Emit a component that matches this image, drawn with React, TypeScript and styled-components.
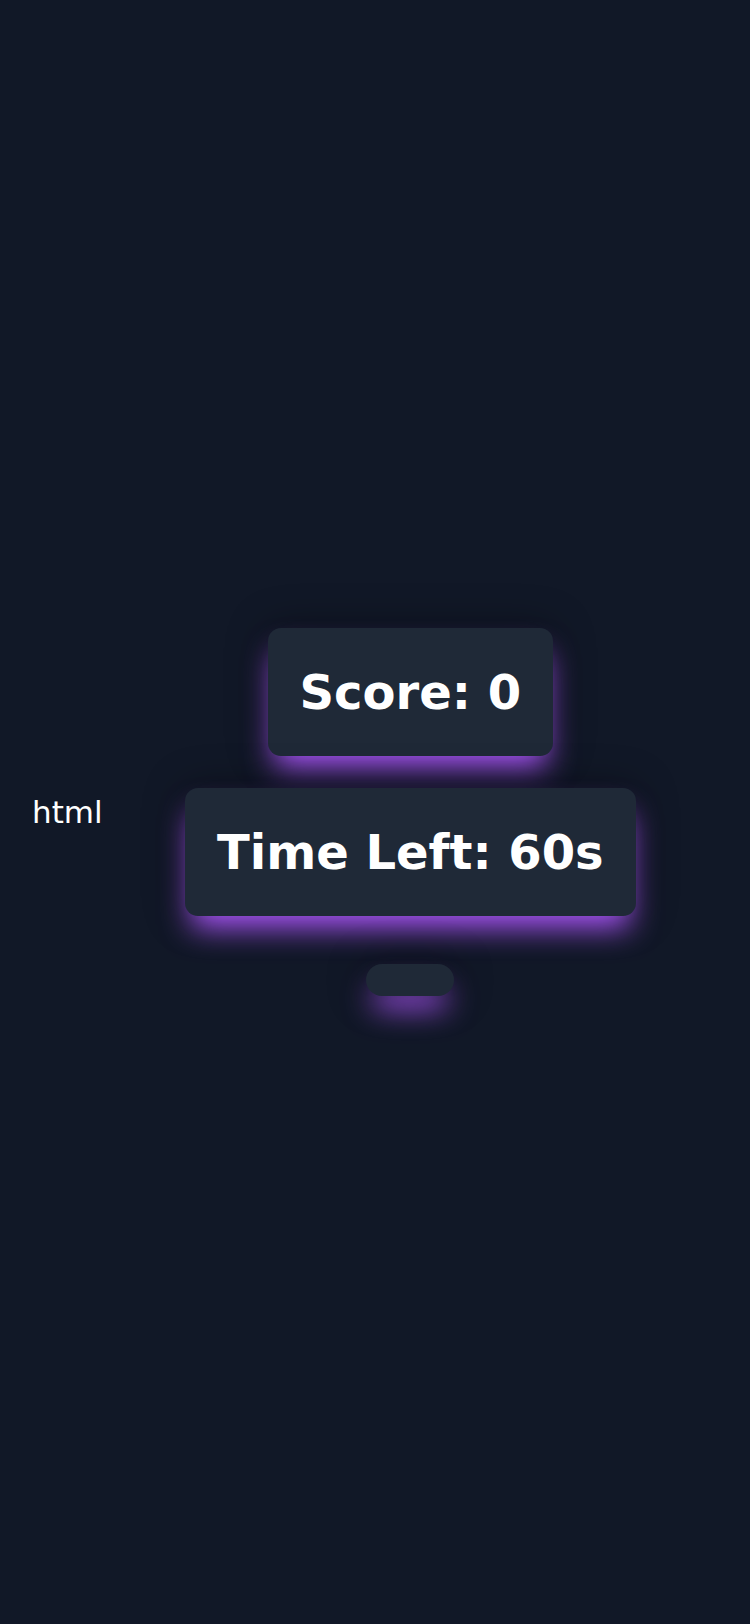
import styled, { createGlobalStyle } from 'styled-components'

const GlobalStyle = createGlobalStyle`
  html, body {
    margin: 0;
    padding: 0;
    background: #111827;
  }

  body {
    font-family: "DejaVu Sans", sans-serif;
    color: #ffffff;
  }
`

const $Page = styled.div`
  box-sizing: border-box;
  min-height: 100vh;
  padding: 0 32px;
  display: flex;
  align-items: center;
`

const $Label = styled.span`
  font-size: 31px;
  color: #ffffff;
`

const $Board = styled.div`
  flex: 1;
  display: flex;
  flex-direction: column;
  align-items: center;
`

// purple glow sits on top of the dark halo
const glow = `
  box-shadow: 0 18px 30px -6px rgba(168, 85, 247, 1), 0 0 40px rgba(0, 0, 0, 0.4);
`

const $Stat = styled.div<{ $gap: number }>`
  background: #1f2937;
  border-radius: 13px;
  padding: 36px 32px;
  font-size: 48px;
  font-weight: 700;
  line-height: 56px;
  color: #ffffff;
  white-space: nowrap;
  margin-bottom: ${({ $gap }) => $gap}px;
  ${glow}
`

const $StartButton = styled.button`
  width: 88px;
  height: 32px;
  border: none;
  border-radius: 16px;
  background: #1f2937;
  padding: 0;
  cursor: pointer;
  ${glow}
`

const App = () => {
  const score = 0
  const timeLeft = 60

  return (
    <>
      <GlobalStyle />
      <$Page>
        <$Label>html</$Label>
        <$Board>
          <$Stat $gap={32}>Score: {score}</$Stat>
          <$Stat $gap={48}>Time Left: {timeLeft}s</$Stat>
          <$StartButton aria-label="start" />
        </$Board>
      </$Page>
    </>
  )
}

export default App
